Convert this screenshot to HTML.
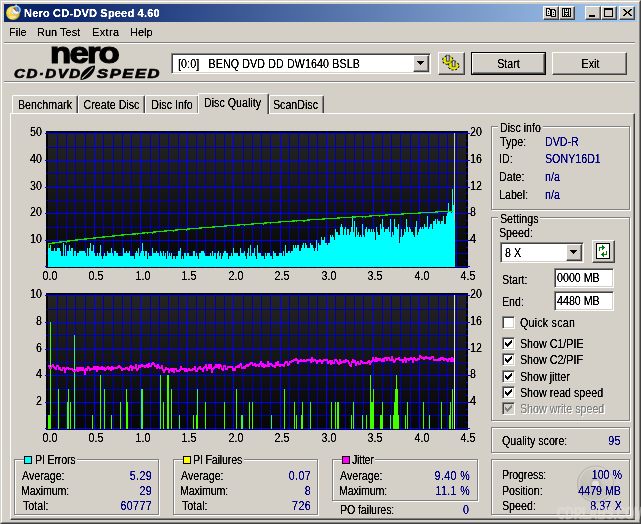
<!DOCTYPE html>
<html><head><meta charset="utf-8"><title>Nero CD-DVD Speed 4.60</title>
<style>
*{box-sizing:border-box;margin:0;padding:0}
html,body{width:641px;height:524px;overflow:hidden;background:#d4d0c8}
body{position:relative;font-family:"Liberation Sans",sans-serif;font-size:12px;color:#000;line-height:13px}
.a{position:absolute}
.t{position:absolute;white-space:nowrap;line-height:13px;height:13px;margin-top:1px;transform:scaleX(.89);transform-origin:0 0}
.c{text-align:center;transform-origin:50% 0}
.t,.m,.lg span{filter:url(#tx)}
.m{position:absolute;white-space:nowrap;line-height:13px;height:13px;font-size:11px}
.b{color:#000080}
.r{text-align:right;transform-origin:100% 0}
.hl{position:absolute;height:1px}
.vl{position:absolute;width:1px}
.grp{position:absolute;border:1px solid #808080;box-shadow:inset 1px 1px 0 #fff, 1px 1px 0 #fff}
.lg{position:absolute;background:#d4d0c8;white-space:nowrap;line-height:13px;height:14px;padding:1px 2px 0}
.lg span{display:inline-block;transform:scaleX(.89);transform-origin:0 0}
.btn{position:absolute;background:#d4d0c8;border:1px solid;border-color:#fff #404040 #404040 #fff;box-shadow:inset -1px -1px 0 #808080, inset 1px 1px 0 #d4d0c8}
.cap{position:absolute;background:#d4d0c8;border:1px solid;border-color:#fff #404040 #404040 #fff;box-shadow:inset -1px -1px 0 #808080;width:16px;height:14px;top:6px}
.sunk{position:absolute;background:#fff;border:1px solid;border-color:#808080 #fff #fff #808080;box-shadow:inset 1px 1px 0 #404040, inset -1px -1px 0 #d4d0c8}
.tab{position:absolute;background:#d4d0c8;border-top:1px solid #fff;border-left:1px solid #fff;border-right:1px solid #404040;box-shadow:inset -1px 0 0 #808080;border-radius:2px 2px 0 0;text-align:center;white-space:nowrap}
.cb{position:absolute;width:13px;height:13px;background:#fff;border:1px solid;border-color:#808080 #fff #fff #808080;box-shadow:inset 1px 1px 0 #404040, inset -1px -1px 0 #d4d0c8}
svg{position:absolute;left:0;top:0}
</style></head>
<body>
<svg width="0" height="0" style="position:absolute"><defs><filter id="tx" x="-5%" y="-25%" width="110%" height="150%" color-interpolation-filters="sRGB"><feComponentTransfer><feFuncA type="linear" slope="2.6" intercept="-0.45"/></feComponentTransfer></filter></defs></svg>
<div class="a" style="left:0;top:0;width:641px;height:524px;border:1px solid;border-color:#d4d0c8 #404040 #404040 #d4d0c8"></div>
<div class="a" style="left:1px;top:1px;width:639px;height:522px;border:1px solid;border-color:#ffffff #808080 #808080 #ffffff"></div>
<div class="a" style="left:4px;top:4px;width:633px;height:18px;background:linear-gradient(to right,#0a246a 0%,#0a246a 8%,#a6caf0 100%)"></div>
<svg width="30" height="24" viewBox="0 0 30 24">
<defs><radialGradient id="dg" cx="0.4" cy="0.35" r="0.75"><stop offset="0" stop-color="#fff6b0"/><stop offset="0.45" stop-color="#f2d838"/><stop offset="1" stop-color="#c8a010"/></radialGradient></defs>
<circle cx="13" cy="13" r="6.900" fill="url(#dg)"/>
<path d="M8 17.500 C10 15.500 13 15 17 16.500 C15.500 19 11 20 8 17.500z" fill="#f4e8b0" opacity="0.8"/>
<circle cx="12.600" cy="12.800" r="1.700" fill="#fffbe0" stroke="#b89820" stroke-width="0.5"/>
<circle cx="16.200" cy="10" r="4.300" fill="#f4f4f8" stroke="#a8b0c0" stroke-width="0.800"/>
<path d="M16.200 6.500 A3.500 3.500 0 0 1 18.500 12.600 L16.200 10z" fill="#2a8ae0"/>
<path d="M13 8.500 A3.500 3.500 0 0 1 16.200 6.500 L16.200 10z" fill="#60b850"/>
<path d="M13.800 7.800 L16.800 11.400" stroke="#d02818" stroke-width="1.200"/>
<rect x="15.400" y="4.600" width="1.600" height="1.300" fill="#d8dce8"/>
</svg>
<div class="m" style="left:24px;top:7px;color:#fff;font-weight:bold;letter-spacing:0.2px">Nero CD-DVD Speed 4.60</div>
<div class="cap" style="left:543px"></div>
<div class="cap" style="left:559px"></div>
<div class="cap" style="left:585px"></div>
<div class="cap" style="left:601px"></div>
<div class="cap" style="left:619px"></div>
<svg width="641" height="24" viewBox="0 0 641 24" shape-rendering="crispEdges">
<!-- copy icon -->
<path d="M546 8h4v1h1v7h-5z M551 9h4v1h1v7h-5z" fill="#000"/>
<path d="M547 9h2v1h1v5h-3z M552 10h2v1h1v5h-3z" fill="#eceae4"/>
<path d="M548 11h1v1h-1z M548 13h1v1h-1z M553 12h1v1h-1z M553 14h1v1h-1z" fill="#000"/>
<!-- save icon -->
<rect x="562" y="8" width="9" height="9" fill="#000"/>
<path d="M563 9h1v7h-1z M569 9h1v7h-1z M565 9h3v3h-3z M565 13h3v3h-3z" fill="#e4e2dc"/>
<path d="M566 9h1v2h-1z M565 14h1v1h-1z M566 15h1v1h-1z M567 14h1v1h-1z" fill="#000"/>
<!-- minimize -->
<rect x="589" y="15" width="6" height="2" fill="#000"/>
<!-- maximize -->
<path d="M604 8h9v9h-9z M605 10h7v6h-7z" fill="#000" fill-rule="evenodd"/>
<!-- close -->
<path d="M623 9h2v1h1v1h1v1h1v-1h1v-1h1v-1h2v1h-1v1h-1v1h-1v1h1v1h1v1h1v1h-2v-1h-1v-1h-1v-1h-1v1h-1v1h-1v1h-2v-1h1v-1h1v-1h1v-1h-1v-1h-1v-1h-1z" fill="#000"/>
</svg>
<div class="m" style="left:9px;top:26px;letter-spacing:0px">File</div>
<div class="m" style="left:37px;top:26px;letter-spacing:0px">Run Test</div>
<div class="m" style="left:92px;top:26px;letter-spacing:0.35px">Extra</div>
<div class="m" style="left:130px;top:26px;letter-spacing:0px">Help</div>
<div class="hl" style="left:4px;top:42px;width:631px;background:#808080"></div>
<div class="hl" style="left:4px;top:43px;width:631px;background:#ffffff"></div>
<div id="nero" class="a" style="left:44px;top:37px;width:80px;height:32px;font-weight:bold;font-size:30px;line-height:32px;letter-spacing:-1.6px;text-align:center;-webkit-text-stroke:1.2px #000;transform:scaleX(1.16);transform-origin:50% 0">nero</div>
<div id="cd" class="a" style="left:14px;top:67px;height:14px;font-weight:bold;font-style:italic;font-size:12px;line-height:14px;white-space:nowrap;letter-spacing:1.2px;-webkit-text-stroke:0.65px #000;transform-origin:0 0;transform:scaleX(1.255)">CD·DVD</div>
<div id="sp" class="a" style="left:96.5px;top:67px;height:14px;font-weight:bold;font-style:italic;font-size:12px;line-height:14px;white-space:nowrap;letter-spacing:1.2px;-webkit-text-stroke:0.65px #000;transform-origin:0 0;transform:scaleX(1.375)">SPEED</div>
<svg width="641" height="100" viewBox="0 0 641 100"><path d="M80.500 80 C80 72 86.500 66.500 95 65.500 C95.500 72 89.500 79.500 80.500 80z" fill="#000"/><path d="M82 78.500 C85.500 75.500 89.500 71.500 93 67.500" stroke="#d4d0c8" stroke-width="1.1" fill="none"/></svg>
<div class="sunk" style="left:171px;top:53px;width:260px;height:21px"></div>
<div class="t" style="left:178px;top:57px;letter-spacing:0.12px">[0:0]&nbsp;&nbsp; BENQ DVD DD DW1640 BSLB</div>
<div class="btn" style="left:413px;top:55px;width:16px;height:17px"></div>
<svg width="641" height="100" viewBox="0 0 641 100" shape-rendering="crispEdges"><path d="M417 61h7v1h-1v1h-1v1h-1v1h-1v-1h-1v-1h-1v-1h-1z" fill="#000"/></svg>
<div class="btn" style="left:438px;top:52px;width:27px;height:23px"></div>
<svg width="641" height="100" viewBox="0 0 641 100"><ellipse cx="447.8" cy="60.2" rx="4.600" ry="3.500" fill="#000" stroke="#000" stroke-width="2.400" stroke-dasharray="1.700 1.500"/>
<ellipse cx="447.8" cy="60.2" rx="4.500" ry="3.400" fill="#f0f000" stroke="#f0f000" stroke-width="1" stroke-dasharray="1.500 1.700" stroke-dashoffset="-0.100"/>
<ellipse cx="447.8" cy="60.2" rx="3.600" ry="2.600" fill="#e4e400"/>
<rect x="446.3" y="55.2" width="3" height="6" fill="#9098a8" stroke="#303030" stroke-width="0.700"/>
<rect x="447.2" y="55.6" width="1" height="5" fill="#d0d4dc"/><ellipse cx="453.6" cy="65.8" rx="4.600" ry="3.500" fill="#000" stroke="#000" stroke-width="2.400" stroke-dasharray="1.700 1.500"/>
<ellipse cx="453.6" cy="65.8" rx="4.500" ry="3.400" fill="#f0f000" stroke="#f0f000" stroke-width="1" stroke-dasharray="1.500 1.700" stroke-dashoffset="-0.100"/>
<ellipse cx="453.6" cy="65.8" rx="3.600" ry="2.600" fill="#e4e400"/>
<rect x="452.1" y="60.8" width="3" height="6" fill="#9098a8" stroke="#303030" stroke-width="0.700"/>
<rect x="453.0" y="61.199999999999996" width="1" height="5" fill="#d0d4dc"/></svg>
<div class="a" style="left:471px;top:52px;width:75px;height:23px;border:1px solid #000"></div>
<div class="btn" style="left:472px;top:53px;width:73px;height:21px"></div>
<div class="t c" style="left:472px;top:57px;width:73px">Start</div>
<div class="btn" style="left:552px;top:52px;width:75px;height:23px"></div>
<div class="t c" style="left:553px;top:57px;width:75px">Exit</div>
<div class="hl" style="left:4px;top:81px;width:631px;background:#808080"></div>
<div class="hl" style="left:4px;top:82px;width:631px;background:#ffffff"></div>
<div class="a" style="left:10px;top:113px;width:625px;height:407px;border:1px solid;border-color:#ffffff #404040 #404040 #ffffff;box-shadow:inset -1px -1px 0 #808080"></div>
<div class="tab" style="left:12px;top:95px;width:66px;height:18px"></div><div class="t c" style="left:12px;top:98px;width:66px">Benchmark</div>
<div class="tab" style="left:78px;top:95px;width:67px;height:18px"></div><div class="t c" style="left:78px;top:98px;width:67px">Create Disc</div>
<div class="tab" style="left:145px;top:95px;width:54px;height:18px"></div><div class="t c" style="left:145px;top:98px;width:54px">Disc Info</div>
<div class="tab" style="left:269px;top:95px;width:55px;height:18px"></div><div class="t c" style="left:268px;top:98px;width:55px">ScanDisc</div>
<div class="tab" style="left:198px;top:93px;width:71px;height:21px"></div><div class="t c" style="left:197px;top:96px;width:71px">Disc Quality</div>
<svg width="641" height="524" viewBox="0 0 641 524" shape-rendering="crispEdges">
<defs><linearGradient id="bg" x1="0" y1="0" x2="0" y2="1"><stop offset="0" stop-color="#242424"/><stop offset="1" stop-color="#060606"/></linearGradient></defs>
<rect x="46" y="131" width="422" height="137" fill="#000"/>
<rect x="48" y="133" width="418" height="134" fill="url(#bg)"/>
<rect x="57" y="133" width="1" height="135" fill="#0000b4"/>
<rect x="66" y="133" width="1" height="135" fill="#0000b4"/>
<rect x="75" y="133" width="1" height="135" fill="#0000b4"/>
<rect x="85" y="133" width="1" height="135" fill="#0000b4"/>
<rect x="94" y="133" width="1" height="135" fill="#0000ff"/>
<rect x="103" y="133" width="1" height="135" fill="#0000b4"/>
<rect x="113" y="133" width="1" height="135" fill="#0000b4"/>
<rect x="122" y="133" width="1" height="135" fill="#0000b4"/>
<rect x="131" y="133" width="1" height="135" fill="#0000b4"/>
<rect x="140" y="133" width="1" height="135" fill="#0000ff"/>
<rect x="150" y="133" width="1" height="135" fill="#0000b4"/>
<rect x="159" y="133" width="1" height="135" fill="#0000b4"/>
<rect x="168" y="133" width="1" height="135" fill="#0000b4"/>
<rect x="178" y="133" width="1" height="135" fill="#0000b4"/>
<rect x="187" y="133" width="1" height="135" fill="#0000ff"/>
<rect x="196" y="133" width="1" height="135" fill="#0000b4"/>
<rect x="205" y="133" width="1" height="135" fill="#0000b4"/>
<rect x="215" y="133" width="1" height="135" fill="#0000b4"/>
<rect x="224" y="133" width="1" height="135" fill="#0000b4"/>
<rect x="233" y="133" width="1" height="135" fill="#0000ff"/>
<rect x="243" y="133" width="1" height="135" fill="#0000b4"/>
<rect x="252" y="133" width="1" height="135" fill="#0000b4"/>
<rect x="261" y="133" width="1" height="135" fill="#0000b4"/>
<rect x="270" y="133" width="1" height="135" fill="#0000b4"/>
<rect x="280" y="133" width="1" height="135" fill="#0000ff"/>
<rect x="289" y="133" width="1" height="135" fill="#0000b4"/>
<rect x="298" y="133" width="1" height="135" fill="#0000b4"/>
<rect x="308" y="133" width="1" height="135" fill="#0000b4"/>
<rect x="317" y="133" width="1" height="135" fill="#0000b4"/>
<rect x="326" y="133" width="1" height="135" fill="#0000ff"/>
<rect x="335" y="133" width="1" height="135" fill="#0000b4"/>
<rect x="345" y="133" width="1" height="135" fill="#0000b4"/>
<rect x="354" y="133" width="1" height="135" fill="#0000b4"/>
<rect x="363" y="133" width="1" height="135" fill="#0000b4"/>
<rect x="373" y="133" width="1" height="135" fill="#0000ff"/>
<rect x="382" y="133" width="1" height="135" fill="#0000b4"/>
<rect x="391" y="133" width="1" height="135" fill="#0000b4"/>
<rect x="400" y="133" width="1" height="135" fill="#0000b4"/>
<rect x="410" y="133" width="1" height="135" fill="#0000b4"/>
<rect x="419" y="133" width="1" height="135" fill="#0000ff"/>
<rect x="428" y="133" width="1" height="135" fill="#0000b4"/>
<rect x="438" y="133" width="1" height="135" fill="#0000b4"/>
<rect x="447" y="133" width="1" height="135" fill="#0000b4"/>
<rect x="456" y="133" width="1" height="135" fill="#0000b4"/>
<rect x="45" y="133" width="425" height="1" fill="#0000ff"/>
<rect x="46" y="147" width="422" height="1" fill="#0000b4"/>
<rect x="45" y="160" width="425" height="1" fill="#0000ff"/>
<rect x="46" y="173" width="422" height="1" fill="#0000b4"/>
<rect x="45" y="187" width="425" height="1" fill="#0000ff"/>
<rect x="46" y="200" width="422" height="1" fill="#0000b4"/>
<rect x="45" y="213" width="425" height="1" fill="#0000ff"/>
<rect x="46" y="227" width="422" height="1" fill="#0000b4"/>
<rect x="45" y="240" width="425" height="1" fill="#0000ff"/>
<rect x="46" y="253" width="422" height="1" fill="#0000b4"/>
<rect x="45" y="266" width="425" height="1" fill="#0000ff"/>
<rect x="466" y="140" width="2" height="1" fill="#0000ff"/>
<rect x="466" y="147" width="2" height="1" fill="#0000ff"/>
<rect x="466" y="153" width="2" height="1" fill="#0000ff"/>
<rect x="466" y="160" width="2" height="1" fill="#0000ff"/>
<rect x="466" y="167" width="2" height="1" fill="#0000ff"/>
<rect x="466" y="173" width="2" height="1" fill="#0000ff"/>
<rect x="466" y="180" width="2" height="1" fill="#0000ff"/>
<rect x="466" y="187" width="2" height="1" fill="#0000ff"/>
<rect x="466" y="193" width="2" height="1" fill="#0000ff"/>
<rect x="466" y="200" width="2" height="1" fill="#0000ff"/>
<rect x="466" y="207" width="2" height="1" fill="#0000ff"/>
<rect x="466" y="213" width="2" height="1" fill="#0000ff"/>
<rect x="466" y="220" width="2" height="1" fill="#0000ff"/>
<rect x="466" y="227" width="2" height="1" fill="#0000ff"/>
<rect x="466" y="233" width="2" height="1" fill="#0000ff"/>
<rect x="466" y="240" width="2" height="1" fill="#0000ff"/>
<rect x="466" y="247" width="2" height="1" fill="#0000ff"/>
<rect x="466" y="253" width="2" height="1" fill="#0000ff"/>
<rect x="466" y="260" width="2" height="1" fill="#0000ff"/>
<rect x="46" y="293" width="422" height="137" fill="#000"/>
<rect x="48" y="295" width="418" height="134" fill="url(#bg)"/>
<rect x="57" y="295" width="1" height="135" fill="#0000b4"/>
<rect x="66" y="295" width="1" height="135" fill="#0000b4"/>
<rect x="75" y="295" width="1" height="135" fill="#0000b4"/>
<rect x="85" y="295" width="1" height="135" fill="#0000b4"/>
<rect x="94" y="295" width="1" height="135" fill="#0000ff"/>
<rect x="103" y="295" width="1" height="135" fill="#0000b4"/>
<rect x="113" y="295" width="1" height="135" fill="#0000b4"/>
<rect x="122" y="295" width="1" height="135" fill="#0000b4"/>
<rect x="131" y="295" width="1" height="135" fill="#0000b4"/>
<rect x="140" y="295" width="1" height="135" fill="#0000ff"/>
<rect x="150" y="295" width="1" height="135" fill="#0000b4"/>
<rect x="159" y="295" width="1" height="135" fill="#0000b4"/>
<rect x="168" y="295" width="1" height="135" fill="#0000b4"/>
<rect x="178" y="295" width="1" height="135" fill="#0000b4"/>
<rect x="187" y="295" width="1" height="135" fill="#0000ff"/>
<rect x="196" y="295" width="1" height="135" fill="#0000b4"/>
<rect x="205" y="295" width="1" height="135" fill="#0000b4"/>
<rect x="215" y="295" width="1" height="135" fill="#0000b4"/>
<rect x="224" y="295" width="1" height="135" fill="#0000b4"/>
<rect x="233" y="295" width="1" height="135" fill="#0000ff"/>
<rect x="243" y="295" width="1" height="135" fill="#0000b4"/>
<rect x="252" y="295" width="1" height="135" fill="#0000b4"/>
<rect x="261" y="295" width="1" height="135" fill="#0000b4"/>
<rect x="270" y="295" width="1" height="135" fill="#0000b4"/>
<rect x="280" y="295" width="1" height="135" fill="#0000ff"/>
<rect x="289" y="295" width="1" height="135" fill="#0000b4"/>
<rect x="298" y="295" width="1" height="135" fill="#0000b4"/>
<rect x="308" y="295" width="1" height="135" fill="#0000b4"/>
<rect x="317" y="295" width="1" height="135" fill="#0000b4"/>
<rect x="326" y="295" width="1" height="135" fill="#0000ff"/>
<rect x="335" y="295" width="1" height="135" fill="#0000b4"/>
<rect x="345" y="295" width="1" height="135" fill="#0000b4"/>
<rect x="354" y="295" width="1" height="135" fill="#0000b4"/>
<rect x="363" y="295" width="1" height="135" fill="#0000b4"/>
<rect x="373" y="295" width="1" height="135" fill="#0000ff"/>
<rect x="382" y="295" width="1" height="135" fill="#0000b4"/>
<rect x="391" y="295" width="1" height="135" fill="#0000b4"/>
<rect x="400" y="295" width="1" height="135" fill="#0000b4"/>
<rect x="410" y="295" width="1" height="135" fill="#0000b4"/>
<rect x="419" y="295" width="1" height="135" fill="#0000ff"/>
<rect x="428" y="295" width="1" height="135" fill="#0000b4"/>
<rect x="438" y="295" width="1" height="135" fill="#0000b4"/>
<rect x="447" y="295" width="1" height="135" fill="#0000b4"/>
<rect x="456" y="295" width="1" height="135" fill="#0000b4"/>
<rect x="45" y="295" width="425" height="1" fill="#0000ff"/>
<rect x="46" y="309" width="422" height="1" fill="#0000b4"/>
<rect x="45" y="322" width="425" height="1" fill="#0000ff"/>
<rect x="46" y="335" width="422" height="1" fill="#0000b4"/>
<rect x="45" y="349" width="425" height="1" fill="#0000ff"/>
<rect x="46" y="362" width="422" height="1" fill="#0000b4"/>
<rect x="45" y="375" width="425" height="1" fill="#0000ff"/>
<rect x="46" y="389" width="422" height="1" fill="#0000b4"/>
<rect x="45" y="402" width="425" height="1" fill="#0000ff"/>
<rect x="46" y="415" width="422" height="1" fill="#0000b4"/>
<rect x="45" y="428" width="425" height="1" fill="#0000ff"/>
<rect x="466" y="302" width="2" height="1" fill="#0000ff"/>
<rect x="466" y="309" width="2" height="1" fill="#0000ff"/>
<rect x="466" y="315" width="2" height="1" fill="#0000ff"/>
<rect x="466" y="322" width="2" height="1" fill="#0000ff"/>
<rect x="466" y="329" width="2" height="1" fill="#0000ff"/>
<rect x="466" y="335" width="2" height="1" fill="#0000ff"/>
<rect x="466" y="342" width="2" height="1" fill="#0000ff"/>
<rect x="466" y="349" width="2" height="1" fill="#0000ff"/>
<rect x="466" y="355" width="2" height="1" fill="#0000ff"/>
<rect x="466" y="362" width="2" height="1" fill="#0000ff"/>
<rect x="466" y="369" width="2" height="1" fill="#0000ff"/>
<rect x="466" y="375" width="2" height="1" fill="#0000ff"/>
<rect x="466" y="382" width="2" height="1" fill="#0000ff"/>
<rect x="466" y="389" width="2" height="1" fill="#0000ff"/>
<rect x="466" y="395" width="2" height="1" fill="#0000ff"/>
<rect x="466" y="402" width="2" height="1" fill="#0000ff"/>
<rect x="466" y="409" width="2" height="1" fill="#0000ff"/>
<rect x="466" y="415" width="2" height="1" fill="#0000ff"/>
<rect x="466" y="422" width="2" height="1" fill="#0000ff"/>
<path d="M48 267V248H49V248H50V245H51V251H52V251H53V251H54V248H55V251H56V251H57V248H58V248H59V248H60V251H61V256H62V256H63V243H64V256H65V245H66V256H67V251H68V251H69V245H70V251H71V248H72V248H73V256H74V251H75V251H76V256H77V253H78V253H79V251H80V251H81V251H82V251H83V251H84V251H85V253H86V256H87V248H88V256H89V248H90V243H91V251H92V251H93V245H94V253H95V256H96V256H97V253H98V256H99V253H100V245H101V256H102V259H103V256H104V253H105V256H106V256H107V251H108V253H109V253H110V253H111V248H112V253H113V256H114V251H115V251H116V253H117V253H118V256H119V256H120V256H121V256H122V256H123V248H124V253H125V253H126V251H127V253H128V253H129V251H130V256H131V256H132V256H133V256H134V259H135V253H136V251H137V253H138V248H139V256H140V253H141V251H142V243H143V251H144V256H145V251H146V251H147V259H148V253H149V256H150V256H151V256H152V248H153V253H154V253H155V253H156V251H157V253H158V253H159V256H160V251H161V253H162V256H163V251H164V256H165V253H166V259H167V251H168V256H169V253H170V256H171V253H172V259H173V256H174V256H175V259H176V256H177V256H178V251H179V251H180V248H181V259H182V256H183V259H184V253H185V253H186V256H187V253H188V253H189V256H190V256H191V256H192V256H193V251H194V251H195V256H196V253H197V256H198V259H199V253H200V253H201V251H202V251H203V251H204V253H205V256H206V256H207V256H208V256H209V256H210V253H211V256H212V251H213V256H214V253H215V253H216V259H217V253H218V251H219V256H220V253H221V259H222V256H223V253H224V251H225V251H226V253H227V253H228V259H229V256H230V256H231V253H232V256H233V248H234V253H235V253H236V253H237V253H238V256H239V256H240V248H241V253H242V253H243V253H244V251H245V256H246V259H247V253H248V248H249V256H250V245H251V256H252V253H253V253H254V248H255V256H256V259H257V245H258V253H259V253H260V253H261V256H262V256H263V256H264V259H265V253H266V256H267V253H268V253H269V253H270V256H271V256H272V259H273V251H274V253H275V253H276V256H277V256H278V256H279V253H280V253H281V253H282V256H283V251H284V256H285V245H286V253H287V253H288V251H289V251H290V253H291V251H292V251H293V245H294V248H295V245H296V248H297V245H298V245H299V251H300V251H301V248H302V245H303V243H304V248H305V243H306V245H307V248H308V248H309V248H310V243H311V245H312V245H313V248H314V251H315V248H316V240H317V251H318V243H319V245H320V245H321V237H322V240H323V240H324V237H325V243H326V243H327V245H328V243H329V243H330V235H331V237H332V235H333V237H334V240H335V229H336V232H337V232H338V235H339V235H340V227H341V224H342V227H343V235H344V229H345V227H346V235H347V229H348V229H349V235H350V232H351V227H352V216H353V232H354V221H355V237H356V227H357V235H358V232H359V237H360V235H361V237H362V224H363V235H364V237H365V229H366V227H367V232H368V229H369V229H370V232H371V229H372V232H373V229H374V232H375V240H376V227H377V232H378V235H379V235H380V224H381V229H382V219H383V227H384V232H385V229H386V229H387V229H388V227H389V232H390V219H391V237H392V232H393V235H394V219H395V227H396V227H397V229H398V224H399V243H400V237H401V229H402V237H403V235H404V229H405V232H406V219H407V227H408V232H409V227H410V229H411V232H412V232H413V235H414V237H415V227H416V221H417V235H418V232H419V229H420V227H421V229H422V227H423V229H424V224H425V227H426V227H427V216H428V229H429V227H430V224H431V224H432V229H433V221H434V221H435V219H436V224H437V219H438V221H439V221H440V224H441V221H442V221H443V216H444V224H445V224H446V216H447V213H448V203H449V211H450V211H451V213H452V189H453V205H454V219H455V267Z" fill="#00ffff"/>
<rect x="454" y="133" width="1" height="87" fill="#c8c8c8"/>
<rect x="454" y="295" width="1" height="134" fill="#e0e0e0"/>
<rect x="48" y="243" width="1" height="5" fill="#14e000"/>
<path d="M48 243h1v1h-1zM49 243h1v1h-1zM50 243h1v1h-1zM51 243h1v1h-1zM52 242h1v2h-1zM53 242h1v2h-1zM54 242h1v2h-1zM55 242h1v1h-1zM56 242h1v1h-1zM57 242h1v1h-1zM58 242h1v1h-1zM59 241h1v2h-1zM60 241h1v2h-1zM61 241h1v2h-1zM62 241h1v1h-1zM63 241h1v1h-1zM64 241h1v1h-1zM65 241h1v1h-1zM66 241h1v1h-1zM67 240h1v2h-1zM68 240h1v2h-1zM69 240h1v2h-1zM70 240h1v1h-1zM71 240h1v1h-1zM72 240h1v1h-1zM73 240h1v1h-1zM74 240h1v1h-1zM75 239h1v2h-1zM76 239h1v2h-1zM77 239h1v2h-1zM78 239h1v1h-1zM79 239h1v1h-1zM80 239h1v1h-1zM81 239h1v1h-1zM82 239h1v1h-1zM83 239h1v1h-1zM84 238h1v2h-1zM85 238h1v2h-1zM86 238h1v2h-1zM87 238h1v1h-1zM88 238h1v1h-1zM89 238h1v1h-1zM90 238h1v1h-1zM91 238h1v1h-1zM92 238h1v1h-1zM93 237h1v2h-1zM94 237h1v2h-1zM95 237h1v2h-1zM96 237h1v1h-1zM97 237h1v1h-1zM98 237h1v1h-1zM99 237h1v1h-1zM100 237h1v1h-1zM101 237h1v1h-1zM102 236h1v2h-1zM103 236h1v2h-1zM104 236h1v2h-1zM105 236h1v1h-1zM106 236h1v1h-1zM107 236h1v1h-1zM108 236h1v1h-1zM109 236h1v1h-1zM110 236h1v1h-1zM111 236h1v1h-1zM112 235h1v2h-1zM113 235h1v2h-1zM114 235h1v2h-1zM115 235h1v1h-1zM116 235h1v1h-1zM117 235h1v1h-1zM118 235h1v1h-1zM119 235h1v1h-1zM120 235h1v1h-1zM121 234h1v2h-1zM122 234h1v2h-1zM123 234h1v2h-1zM124 234h1v1h-1zM125 234h1v1h-1zM126 234h1v1h-1zM127 234h1v1h-1zM128 234h1v1h-1zM129 234h1v1h-1zM130 234h1v1h-1zM131 234h1v1h-1zM132 233h1v2h-1zM133 233h1v2h-1zM134 233h1v2h-1zM135 233h1v1h-1zM136 233h1v1h-1zM137 233h1v1h-1zM138 233h1v1h-1zM139 233h1v1h-1zM140 233h1v1h-1zM141 233h1v1h-1zM142 232h1v2h-1zM143 232h1v2h-1zM144 232h1v2h-1zM145 232h1v1h-1zM146 232h1v1h-1zM147 232h1v1h-1zM148 232h1v1h-1zM149 232h1v1h-1zM150 232h1v1h-1zM151 232h1v1h-1zM152 232h1v1h-1zM153 231h1v2h-1zM154 231h1v2h-1zM155 231h1v2h-1zM156 231h1v1h-1zM157 231h1v1h-1zM158 231h1v1h-1zM159 231h1v1h-1zM160 231h1v1h-1zM161 231h1v1h-1zM162 231h1v1h-1zM163 231h1v1h-1zM164 230h1v2h-1zM165 230h1v2h-1zM166 230h1v2h-1zM167 230h1v1h-1zM168 230h1v1h-1zM169 230h1v1h-1zM170 230h1v1h-1zM171 230h1v1h-1zM172 230h1v1h-1zM173 230h1v1h-1zM174 230h1v1h-1zM175 229h1v2h-1zM176 229h1v2h-1zM177 229h1v2h-1zM178 229h1v1h-1zM179 229h1v1h-1zM180 229h1v1h-1zM181 229h1v1h-1zM182 229h1v1h-1zM183 229h1v1h-1zM184 229h1v1h-1zM185 229h1v1h-1zM186 229h1v1h-1zM187 228h1v2h-1zM188 228h1v2h-1zM189 228h1v2h-1zM190 228h1v1h-1zM191 228h1v1h-1zM192 228h1v1h-1zM193 228h1v1h-1zM194 228h1v1h-1zM195 228h1v1h-1zM196 228h1v1h-1zM197 228h1v1h-1zM198 228h1v1h-1zM199 227h1v2h-1zM200 227h1v2h-1zM201 227h1v2h-1zM202 227h1v1h-1zM203 227h1v1h-1zM204 227h1v1h-1zM205 227h1v1h-1zM206 227h1v1h-1zM207 227h1v1h-1zM208 227h1v1h-1zM209 227h1v1h-1zM210 227h1v1h-1zM211 227h1v1h-1zM212 226h1v2h-1zM213 226h1v2h-1zM214 226h1v2h-1zM215 226h1v1h-1zM216 226h1v1h-1zM217 226h1v1h-1zM218 226h1v1h-1zM219 226h1v1h-1zM220 226h1v1h-1zM221 226h1v1h-1zM222 226h1v1h-1zM223 226h1v1h-1zM224 225h1v2h-1zM225 225h1v2h-1zM226 225h1v2h-1zM227 225h1v1h-1zM228 225h1v1h-1zM229 225h1v1h-1zM230 225h1v1h-1zM231 225h1v1h-1zM232 225h1v1h-1zM233 225h1v1h-1zM234 225h1v1h-1zM235 225h1v1h-1zM236 225h1v1h-1zM237 224h1v2h-1zM238 224h1v2h-1zM239 224h1v2h-1zM240 224h1v1h-1zM241 224h1v1h-1zM242 224h1v1h-1zM243 224h1v1h-1zM244 224h1v1h-1zM245 224h1v1h-1zM246 224h1v1h-1zM247 224h1v1h-1zM248 224h1v1h-1zM249 224h1v1h-1zM250 224h1v1h-1zM251 223h1v2h-1zM252 223h1v2h-1zM253 223h1v2h-1zM254 223h1v1h-1zM255 223h1v1h-1zM256 223h1v1h-1zM257 223h1v1h-1zM258 223h1v1h-1zM259 223h1v1h-1zM260 223h1v1h-1zM261 223h1v1h-1zM262 223h1v1h-1zM263 223h1v1h-1zM264 222h1v2h-1zM265 222h1v2h-1zM266 222h1v2h-1zM267 222h1v1h-1zM268 222h1v1h-1zM269 222h1v1h-1zM270 222h1v1h-1zM271 222h1v1h-1zM272 222h1v1h-1zM273 222h1v1h-1zM274 222h1v1h-1zM275 222h1v1h-1zM276 222h1v1h-1zM277 222h1v1h-1zM278 221h1v2h-1zM279 221h1v2h-1zM280 221h1v2h-1zM281 221h1v1h-1zM282 221h1v1h-1zM283 221h1v1h-1zM284 221h1v1h-1zM285 221h1v1h-1zM286 221h1v1h-1zM287 221h1v1h-1zM288 221h1v1h-1zM289 221h1v1h-1zM290 221h1v1h-1zM291 221h1v1h-1zM292 220h1v2h-1zM293 220h1v2h-1zM294 220h1v2h-1zM295 220h1v1h-1zM296 220h1v1h-1zM297 220h1v1h-1zM298 220h1v1h-1zM299 220h1v1h-1zM300 220h1v1h-1zM301 220h1v1h-1zM302 220h1v1h-1zM303 220h1v1h-1zM304 220h1v1h-1zM305 220h1v1h-1zM306 220h1v1h-1zM307 219h1v2h-1zM308 219h1v2h-1zM309 219h1v2h-1zM310 219h1v1h-1zM311 219h1v1h-1zM312 219h1v1h-1zM313 219h1v1h-1zM314 219h1v1h-1zM315 219h1v1h-1zM316 219h1v1h-1zM317 219h1v1h-1zM318 219h1v1h-1zM319 219h1v1h-1zM320 219h1v1h-1zM321 219h1v1h-1zM322 218h1v2h-1zM323 218h1v2h-1zM324 218h1v2h-1zM325 218h1v1h-1zM326 218h1v1h-1zM327 218h1v1h-1zM328 218h1v1h-1zM329 218h1v1h-1zM330 218h1v1h-1zM331 218h1v1h-1zM332 218h1v1h-1zM333 218h1v1h-1zM334 218h1v1h-1zM335 218h1v1h-1zM336 218h1v1h-1zM337 217h1v2h-1zM338 217h1v2h-1zM339 217h1v2h-1zM340 217h1v1h-1zM341 217h1v1h-1zM342 217h1v1h-1zM343 217h1v1h-1zM344 217h1v1h-1zM345 217h1v1h-1zM346 217h1v1h-1zM347 217h1v1h-1zM348 217h1v1h-1zM349 217h1v1h-1zM350 217h1v1h-1zM351 217h1v1h-1zM352 217h1v1h-1zM353 216h1v2h-1zM354 216h1v2h-1zM355 216h1v2h-1zM356 216h1v1h-1zM357 216h1v1h-1zM358 216h1v1h-1zM359 216h1v1h-1zM360 216h1v1h-1zM361 216h1v1h-1zM362 216h1v1h-1zM363 216h1v1h-1zM364 216h1v1h-1zM365 216h1v1h-1zM366 216h1v1h-1zM367 216h1v1h-1zM368 216h1v1h-1zM369 215h1v2h-1zM370 215h1v2h-1zM371 215h1v2h-1zM372 215h1v1h-1zM373 215h1v1h-1zM374 215h1v1h-1zM375 215h1v1h-1zM376 215h1v1h-1zM377 215h1v1h-1zM378 215h1v1h-1zM379 215h1v1h-1zM380 215h1v1h-1zM381 215h1v1h-1zM382 215h1v1h-1zM383 215h1v1h-1zM384 215h1v1h-1zM385 214h1v2h-1zM386 214h1v2h-1zM387 214h1v2h-1zM388 214h1v1h-1zM389 214h1v1h-1zM390 214h1v1h-1zM391 214h1v1h-1zM392 214h1v1h-1zM393 214h1v1h-1zM394 214h1v1h-1zM395 214h1v1h-1zM396 214h1v1h-1zM397 214h1v1h-1zM398 214h1v1h-1zM399 214h1v1h-1zM400 214h1v1h-1zM401 213h1v2h-1zM402 213h1v2h-1zM403 213h1v2h-1zM404 213h1v1h-1zM405 213h1v1h-1zM406 213h1v1h-1zM407 213h1v1h-1zM408 213h1v1h-1zM409 213h1v1h-1zM410 213h1v1h-1zM411 213h1v1h-1zM412 213h1v1h-1zM413 213h1v1h-1zM414 213h1v1h-1zM415 213h1v1h-1zM416 213h1v1h-1zM417 213h1v1h-1zM418 212h1v2h-1zM419 212h1v2h-1zM420 212h1v2h-1zM421 212h1v1h-1zM422 212h1v1h-1zM423 212h1v1h-1zM424 212h1v1h-1zM425 212h1v1h-1zM426 212h1v1h-1zM427 212h1v1h-1zM428 212h1v1h-1zM429 212h1v1h-1zM430 212h1v1h-1zM431 212h1v1h-1zM432 212h1v1h-1zM433 212h1v1h-1zM434 212h1v1h-1zM435 211h1v2h-1zM436 211h1v2h-1zM437 211h1v2h-1zM438 211h1v1h-1zM439 211h1v1h-1zM440 211h1v1h-1zM441 211h1v1h-1zM442 211h1v1h-1zM443 211h1v1h-1zM444 211h1v1h-1zM445 211h1v1h-1zM446 211h1v1h-1zM447 211h1v1h-1zM448 211h1v1h-1zM449 211h1v1h-1zM450 211h1v1h-1zM451 211h1v1h-1zM452 211h1v1h-1z" fill="#14e000"/>
<path d="M66 242h1v1h-1zM85 239h1v1h-1zM135 234h1v1h-1zM137 234h1v1h-1zM147 233h1v1h-1zM152 233h1v1h-1zM173 231h1v1h-1zM176 230h1v1h-1zM186 230h1v1h-1zM201 228h1v1h-1zM244 225h1v1h-1zM263 224h1v1h-1zM270 223h1v1h-1zM293 221h1v1h-1zM296 221h1v1h-1zM303 221h1v1h-1zM304 221h1v1h-1zM362 217h1v1h-1zM365 217h1v1h-1zM370 216h1v1h-1zM379 216h1v1h-1zM435 212h1v1h-1z" fill="#14e000"/>
<rect x="48" y="415" width="1" height="14" fill="#40ff00"/>
<rect x="49" y="415" width="1" height="14" fill="#40ff00"/>
<rect x="50" y="322" width="1" height="107" fill="#40ff00"/>
<rect x="58" y="389" width="1" height="40" fill="#40ff00"/>
<rect x="67" y="402" width="1" height="27" fill="#40ff00"/>
<rect x="68" y="389" width="1" height="40" fill="#40ff00"/>
<rect x="70" y="402" width="1" height="27" fill="#40ff00"/>
<rect x="74" y="335" width="1" height="94" fill="#40ff00"/>
<rect x="92" y="415" width="1" height="14" fill="#40ff00"/>
<rect x="100" y="375" width="1" height="54" fill="#40ff00"/>
<rect x="104" y="389" width="1" height="40" fill="#40ff00"/>
<rect x="111" y="415" width="1" height="14" fill="#40ff00"/>
<rect x="120" y="402" width="1" height="27" fill="#40ff00"/>
<rect x="126" y="389" width="1" height="40" fill="#40ff00"/>
<rect x="127" y="402" width="1" height="27" fill="#40ff00"/>
<rect x="141" y="389" width="1" height="40" fill="#40ff00"/>
<rect x="142" y="389" width="1" height="40" fill="#40ff00"/>
<rect x="160" y="375" width="1" height="54" fill="#40ff00"/>
<rect x="163" y="402" width="1" height="27" fill="#40ff00"/>
<rect x="167" y="375" width="1" height="54" fill="#40ff00"/>
<rect x="168" y="375" width="1" height="54" fill="#40ff00"/>
<rect x="171" y="389" width="1" height="40" fill="#40ff00"/>
<rect x="179" y="415" width="1" height="14" fill="#40ff00"/>
<rect x="193" y="415" width="1" height="14" fill="#40ff00"/>
<rect x="196" y="415" width="1" height="14" fill="#40ff00"/>
<rect x="197" y="389" width="1" height="40" fill="#40ff00"/>
<rect x="205" y="402" width="1" height="27" fill="#40ff00"/>
<rect x="224" y="402" width="1" height="27" fill="#40ff00"/>
<rect x="236" y="389" width="1" height="40" fill="#40ff00"/>
<rect x="241" y="415" width="1" height="14" fill="#40ff00"/>
<rect x="242" y="415" width="1" height="14" fill="#40ff00"/>
<rect x="249" y="402" width="1" height="27" fill="#40ff00"/>
<rect x="252" y="402" width="1" height="27" fill="#40ff00"/>
<rect x="271" y="415" width="1" height="14" fill="#40ff00"/>
<rect x="284" y="389" width="1" height="40" fill="#40ff00"/>
<rect x="294" y="402" width="1" height="27" fill="#40ff00"/>
<rect x="296" y="415" width="1" height="14" fill="#40ff00"/>
<rect x="301" y="415" width="1" height="14" fill="#40ff00"/>
<rect x="302" y="402" width="1" height="27" fill="#40ff00"/>
<rect x="310" y="402" width="1" height="27" fill="#40ff00"/>
<rect x="331" y="402" width="1" height="27" fill="#40ff00"/>
<rect x="335" y="402" width="1" height="27" fill="#40ff00"/>
<rect x="337" y="402" width="1" height="27" fill="#40ff00"/>
<rect x="338" y="402" width="1" height="27" fill="#40ff00"/>
<rect x="351" y="415" width="1" height="14" fill="#40ff00"/>
<rect x="353" y="402" width="1" height="27" fill="#40ff00"/>
<rect x="362" y="415" width="1" height="14" fill="#40ff00"/>
<rect x="366" y="415" width="1" height="14" fill="#40ff00"/>
<rect x="370" y="375" width="1" height="54" fill="#40ff00"/>
<rect x="371" y="402" width="1" height="27" fill="#40ff00"/>
<rect x="372" y="402" width="1" height="27" fill="#40ff00"/>
<rect x="373" y="389" width="1" height="40" fill="#40ff00"/>
<rect x="380" y="415" width="1" height="14" fill="#40ff00"/>
<rect x="381" y="415" width="1" height="14" fill="#40ff00"/>
<rect x="382" y="402" width="1" height="27" fill="#40ff00"/>
<rect x="390" y="415" width="1" height="14" fill="#40ff00"/>
<rect x="393" y="415" width="1" height="14" fill="#40ff00"/>
<rect x="394" y="402" width="1" height="27" fill="#40ff00"/>
<rect x="395" y="389" width="1" height="40" fill="#40ff00"/>
<rect x="396" y="375" width="1" height="54" fill="#40ff00"/>
<rect x="397" y="389" width="1" height="40" fill="#40ff00"/>
<rect x="398" y="415" width="1" height="14" fill="#40ff00"/>
<rect x="405" y="415" width="1" height="14" fill="#40ff00"/>
<rect x="407" y="402" width="1" height="27" fill="#40ff00"/>
<rect x="423" y="402" width="1" height="27" fill="#40ff00"/>
<rect x="429" y="415" width="1" height="14" fill="#40ff00"/>
<rect x="441" y="402" width="1" height="27" fill="#40ff00"/>
<rect x="449" y="415" width="1" height="14" fill="#40ff00"/>
<rect x="450" y="402" width="1" height="27" fill="#40ff00"/>
<rect x="452" y="389" width="1" height="40" fill="#40ff00"/>
<path d="M48 365h1v2h-1zM49 365h1v4h-1zM50 367h1v2h-1zM51 365h1v4h-1zM52 364h1v3h-1zM53 364h1v4h-1zM54 366h1v3h-1zM55 367h1v3h-1zM56 365h1v5h-1zM57 365h1v2h-1zM58 365h1v5h-1zM59 367h1v3h-1zM60 367h1v4h-1zM61 369h1v2h-1zM62 367h1v4h-1zM63 367h1v2h-1zM64 367h1v6h-1zM65 368h1v5h-1zM66 367h1v3h-1zM67 367h1v2h-1zM68 367h1v3h-1zM69 368h1v2h-1zM70 368h1v2h-1zM71 368h1v2h-1zM72 368h1v3h-1zM73 369h1v3h-1zM74 370h1v2h-1zM75 369h1v3h-1zM76 367h1v4h-1zM77 367h1v5h-1zM78 367h1v5h-1zM79 367h1v4h-1zM80 367h1v4h-1zM81 367h1v4h-1zM82 367h1v4h-1zM83 367h1v4h-1zM84 369h1v6h-1zM85 368h1v7h-1zM86 368h1v3h-1zM87 366h1v5h-1zM88 366h1v3h-1zM89 367h1v4h-1zM90 368h1v3h-1zM91 368h1v2h-1zM92 368h1v2h-1zM93 366h1v4h-1zM94 366h1v4h-1zM95 366h1v4h-1zM96 366h1v6h-1zM97 366h1v6h-1zM98 366h1v4h-1zM99 367h1v3h-1zM100 367h1v3h-1zM101 366h1v4h-1zM102 366h1v4h-1zM103 367h1v3h-1zM104 367h1v4h-1zM105 368h1v3h-1zM106 367h1v3h-1zM107 366h1v3h-1zM108 366h1v4h-1zM109 367h1v3h-1zM110 367h1v4h-1zM111 366h1v5h-1zM112 366h1v4h-1zM113 367h1v3h-1zM114 367h1v2h-1zM115 367h1v2h-1zM116 367h1v2h-1zM117 366h1v3h-1zM118 365h1v3h-1zM119 365h1v3h-1zM120 366h1v3h-1zM121 367h1v4h-1zM122 368h1v3h-1zM123 368h1v2h-1zM124 368h1v2h-1zM125 367h1v3h-1zM126 367h1v2h-1zM127 367h1v3h-1zM128 368h1v3h-1zM129 366h1v5h-1zM130 365h1v3h-1zM131 365h1v6h-1zM132 366h1v5h-1zM133 366h1v3h-1zM134 367h1v2h-1zM135 364h1v5h-1zM136 364h1v7h-1zM137 368h1v3h-1zM138 365h1v5h-1zM139 365h1v3h-1zM140 365h1v3h-1zM141 364h1v3h-1zM142 364h1v3h-1zM143 365h1v2h-1zM144 365h1v3h-1zM145 365h1v3h-1zM146 364h1v3h-1zM147 364h1v4h-1zM148 363h1v5h-1zM149 363h1v4h-1zM150 365h1v2h-1zM151 363h1v4h-1zM152 362h1v3h-1zM153 362h1v3h-1zM154 363h1v4h-1zM155 365h1v2h-1zM156 365h1v4h-1zM157 364h1v5h-1zM158 364h1v4h-1zM159 366h1v3h-1zM160 367h1v2h-1zM161 365h1v4h-1zM162 365h1v6h-1zM163 369h1v4h-1zM164 369h1v4h-1zM165 367h1v4h-1zM166 367h1v3h-1zM167 368h1v2h-1zM168 368h1v5h-1zM169 369h1v4h-1zM170 368h1v3h-1zM171 368h1v4h-1zM172 368h1v4h-1zM173 368h1v5h-1zM174 368h1v5h-1zM175 368h1v2h-1zM176 368h1v4h-1zM177 370h1v2h-1zM178 370h1v2h-1zM179 369h1v3h-1zM180 366h1v5h-1zM181 366h1v4h-1zM182 368h1v2h-1zM183 368h1v2h-1zM184 368h1v4h-1zM185 368h1v4h-1zM186 368h1v4h-1zM187 369h1v3h-1zM188 368h1v3h-1zM189 368h1v3h-1zM190 369h1v2h-1zM191 369h1v2h-1zM192 368h1v3h-1zM193 368h1v2h-1zM194 366h1v4h-1zM195 366h1v6h-1zM196 370h1v2h-1zM197 368h1v4h-1zM198 367h1v3h-1zM199 366h1v3h-1zM200 366h1v4h-1zM201 368h1v2h-1zM202 368h1v4h-1zM203 367h1v5h-1zM204 366h1v3h-1zM205 364h1v4h-1zM206 364h1v7h-1zM207 367h1v4h-1zM208 364h1v5h-1zM209 364h1v5h-1zM210 364h1v5h-1zM211 364h1v9h-1zM212 368h1v5h-1zM213 367h1v3h-1zM214 366h1v3h-1zM215 364h1v4h-1zM216 364h1v4h-1zM217 364h1v4h-1zM218 364h1v5h-1zM219 364h1v5h-1zM220 364h1v3h-1zM221 365h1v5h-1zM222 368h1v3h-1zM223 365h1v6h-1zM224 365h1v2h-1zM225 365h1v5h-1zM226 368h1v2h-1zM227 366h1v4h-1zM228 366h1v2h-1zM229 366h1v2h-1zM230 366h1v2h-1zM231 366h1v2h-1zM232 366h1v5h-1zM233 368h1v3h-1zM234 368h1v3h-1zM235 366h1v5h-1zM236 366h1v2h-1zM237 365h1v3h-1zM238 365h1v3h-1zM239 364h1v4h-1zM240 363h1v3h-1zM241 363h1v6h-1zM242 367h1v2h-1zM243 366h1v3h-1zM244 366h1v3h-1zM245 365h1v4h-1zM246 364h1v3h-1zM247 364h1v3h-1zM248 364h1v3h-1zM249 363h1v3h-1zM250 362h1v3h-1zM251 362h1v2h-1zM252 362h1v4h-1zM253 364h1v2h-1zM254 363h1v3h-1zM255 363h1v4h-1zM256 364h1v3h-1zM257 364h1v2h-1zM258 364h1v3h-1zM259 363h1v4h-1zM260 361h1v4h-1zM261 361h1v6h-1zM262 363h1v4h-1zM263 363h1v5h-1zM264 364h1v4h-1zM265 364h1v3h-1zM266 365h1v2h-1zM267 361h1v6h-1zM268 361h1v6h-1zM269 363h1v4h-1zM270 363h1v2h-1zM271 363h1v3h-1zM272 364h1v3h-1zM273 365h1v2h-1zM274 365h1v3h-1zM275 362h1v6h-1zM276 362h1v4h-1zM277 361h1v5h-1zM278 361h1v5h-1zM279 364h1v3h-1zM280 364h1v3h-1zM281 364h1v2h-1zM282 364h1v2h-1zM283 364h1v3h-1zM284 362h1v5h-1zM285 361h1v3h-1zM286 361h1v2h-1zM287 361h1v5h-1zM288 363h1v3h-1zM289 361h1v4h-1zM290 361h1v2h-1zM291 360h1v3h-1zM292 360h1v2h-1zM293 359h1v3h-1zM294 359h1v2h-1zM295 358h1v3h-1zM296 358h1v3h-1zM297 359h1v5h-1zM298 360h1v4h-1zM299 360h1v2h-1zM300 359h1v3h-1zM301 359h1v3h-1zM302 360h1v2h-1zM303 359h1v3h-1zM304 359h1v3h-1zM305 360h1v2h-1zM306 359h1v3h-1zM307 359h1v2h-1zM308 359h1v2h-1zM309 359h1v2h-1zM310 359h1v4h-1zM311 357h1v6h-1zM312 357h1v5h-1zM313 359h1v3h-1zM314 359h1v2h-1zM315 359h1v3h-1zM316 360h1v4h-1zM317 360h1v4h-1zM318 360h1v2h-1zM319 359h1v3h-1zM320 359h1v3h-1zM321 360h1v4h-1zM322 360h1v4h-1zM323 359h1v3h-1zM324 359h1v2h-1zM325 359h1v2h-1zM326 359h1v2h-1zM327 359h1v5h-1zM328 361h1v3h-1zM329 360h1v3h-1zM330 360h1v5h-1zM331 360h1v5h-1zM332 360h1v4h-1zM333 362h1v2h-1zM334 359h1v5h-1zM335 359h1v2h-1zM336 359h1v3h-1zM337 360h1v4h-1zM338 362h1v3h-1zM339 359h1v6h-1zM340 359h1v5h-1zM341 361h1v3h-1zM342 361h1v2h-1zM343 360h1v3h-1zM344 360h1v3h-1zM345 359h1v4h-1zM346 359h1v3h-1zM347 360h1v2h-1zM348 360h1v4h-1zM349 362h1v4h-1zM350 364h1v3h-1zM351 361h1v6h-1zM352 359h1v4h-1zM353 359h1v4h-1zM354 360h1v3h-1zM355 360h1v6h-1zM356 362h1v4h-1zM357 361h1v3h-1zM358 361h1v4h-1zM359 363h1v2h-1zM360 360h1v5h-1zM361 360h1v3h-1zM362 361h1v3h-1zM363 362h1v2h-1zM364 362h1v2h-1zM365 362h1v2h-1zM366 362h1v2h-1zM367 361h1v3h-1zM368 360h1v3h-1zM369 360h1v5h-1zM370 361h1v4h-1zM371 360h1v3h-1zM372 357h1v5h-1zM373 357h1v4h-1zM374 359h1v3h-1zM375 357h1v5h-1zM376 357h1v5h-1zM377 358h1v4h-1zM378 358h1v3h-1zM379 358h1v3h-1zM380 358h1v3h-1zM381 359h1v3h-1zM382 358h1v4h-1zM383 358h1v4h-1zM384 357h1v5h-1zM385 357h1v2h-1zM386 357h1v4h-1zM387 357h1v4h-1zM388 357h1v2h-1zM389 357h1v4h-1zM390 359h1v2h-1zM391 356h1v5h-1zM392 356h1v5h-1zM393 359h1v4h-1zM394 360h1v3h-1zM395 358h1v4h-1zM396 358h1v2h-1zM397 358h1v2h-1zM398 357h1v3h-1zM399 357h1v4h-1zM400 359h1v2h-1zM401 359h1v2h-1zM402 359h1v4h-1zM403 359h1v4h-1zM404 357h1v4h-1zM405 357h1v6h-1zM406 358h1v5h-1zM407 358h1v2h-1zM408 358h1v3h-1zM409 358h1v3h-1zM410 357h1v3h-1zM411 357h1v3h-1zM412 358h1v5h-1zM413 357h1v6h-1zM414 357h1v3h-1zM415 358h1v3h-1zM416 359h1v2h-1zM417 358h1v3h-1zM418 358h1v2h-1zM419 355h1v5h-1zM420 355h1v3h-1zM421 356h1v3h-1zM422 357h1v2h-1zM423 357h1v3h-1zM424 357h1v3h-1zM425 356h1v3h-1zM426 356h1v3h-1zM427 357h1v2h-1zM428 357h1v2h-1zM429 357h1v3h-1zM430 357h1v3h-1zM431 356h1v3h-1zM432 356h1v2h-1zM433 356h1v5h-1zM434 359h1v2h-1zM435 359h1v2h-1zM436 359h1v2h-1zM437 359h1v2h-1zM438 358h1v3h-1zM439 358h1v3h-1zM440 357h1v4h-1zM441 357h1v3h-1zM442 357h1v3h-1zM443 357h1v4h-1zM444 358h1v3h-1zM445 358h1v2h-1zM446 358h1v3h-1zM447 359h1v3h-1zM448 358h1v4h-1zM449 358h1v2h-1zM450 358h1v4h-1zM451 357h1v5h-1zM452 357h1v5h-1zM453 358h1v4h-1z" fill="#ff00ff"/>
</svg>
<div class="t r" style="left:21.5px;top:125px;width:20px">50</div>
<div class="t" style="left:470px;top:125px">20</div>
<div class="t r" style="left:21.5px;top:152px;width:20px">40</div>
<div class="t" style="left:470px;top:152px">16</div>
<div class="t r" style="left:21.5px;top:179px;width:20px">30</div>
<div class="t" style="left:470px;top:179px">12</div>
<div class="t r" style="left:21.5px;top:205px;width:20px">20</div>
<div class="t" style="left:470px;top:205px">8</div>
<div class="t r" style="left:21.5px;top:232px;width:20px">10</div>
<div class="t" style="left:470px;top:232px">4</div>
<div class="t r" style="left:21.5px;top:287px;width:20px">10</div>
<div class="t" style="left:470px;top:287px">20</div>
<div class="t r" style="left:21.5px;top:314px;width:20px">8</div>
<div class="t" style="left:470px;top:314px">16</div>
<div class="t r" style="left:21.5px;top:341px;width:20px">6</div>
<div class="t" style="left:470px;top:341px">12</div>
<div class="t r" style="left:21.5px;top:367px;width:20px">4</div>
<div class="t" style="left:470px;top:367px">8</div>
<div class="t r" style="left:21.5px;top:394px;width:20px">2</div>
<div class="t" style="left:470px;top:394px">4</div>
<div class="t c" style="left:38px;top:269px;width:24px">0.0</div>
<div class="t c" style="left:84px;top:269px;width:24px">0.5</div>
<div class="t c" style="left:131px;top:269px;width:24px">1.0</div>
<div class="t c" style="left:177px;top:269px;width:24px">1.5</div>
<div class="t c" style="left:224px;top:269px;width:24px">2.0</div>
<div class="t c" style="left:270px;top:269px;width:24px">2.5</div>
<div class="t c" style="left:317px;top:269px;width:24px">3.0</div>
<div class="t c" style="left:363px;top:269px;width:24px">3.5</div>
<div class="t c" style="left:410px;top:269px;width:24px">4.0</div>
<div class="t c" style="left:456px;top:269px;width:24px">4.5</div>
<div class="t c" style="left:38px;top:431px;width:24px">0.0</div>
<div class="t c" style="left:84px;top:431px;width:24px">0.5</div>
<div class="t c" style="left:131px;top:431px;width:24px">1.0</div>
<div class="t c" style="left:177px;top:431px;width:24px">1.5</div>
<div class="t c" style="left:224px;top:431px;width:24px">2.0</div>
<div class="t c" style="left:270px;top:431px;width:24px">2.5</div>
<div class="t c" style="left:317px;top:431px;width:24px">3.0</div>
<div class="t c" style="left:363px;top:431px;width:24px">3.5</div>
<div class="t c" style="left:410px;top:431px;width:24px">4.0</div>
<div class="t c" style="left:456px;top:431px;width:24px">4.5</div>
<div class="grp" style="left:491px;top:126px;width:139px;height:84px"></div>
<div class="lg" style="left:498px;top:121px;width:45px"><span>Disc info</span></div>
<div class="t" style="left:500px;top:135px">Type:</div>
<div class="t b" style="left:545px;top:135px">DVD-R</div>
<div class="t" style="left:499px;top:152px">ID:</div>
<div class="t b" style="left:545px;top:152px">SONY16D1</div>
<div class="t" style="left:499px;top:170px">Date:</div>
<div class="t b" style="left:545px;top:170px">n/a</div>
<div class="t" style="left:499px;top:188px">Label:</div>
<div class="t b" style="left:545px;top:188px">n/a</div>
<div class="grp" style="left:491px;top:217px;width:139px;height:204px"></div>
<div class="lg" style="left:498px;top:212px;width:42px"><span>Settings</span></div>
<div class="t" style="left:499px;top:226px">Speed:</div>
<div class="sunk" style="left:500px;top:242px;width:84px;height:21px"></div>
<div class="t" style="left:505px;top:246px">8 X</div>
<div class="btn" style="left:566px;top:244px;width:16px;height:17px"></div>
<svg width="641" height="524" viewBox="0 0 641 524" shape-rendering="crispEdges"><path d="M570 250h7v1h-1v1h-1v1h-1v1h-1v-1h-1v-1h-1v-1h-1z" fill="#000"/></svg>
<div class="btn" style="left:592px;top:240px;width:23px;height:23px"></div>
<svg width="641" height="524" viewBox="0 0 641 524" shape-rendering="crispEdges">
<rect x="596" y="243" width="14" height="16" fill="#000"/><rect x="597" y="244" width="12" height="14" fill="#fff"/>
<path d="M599 248h1v3h-1z M599 247h5v1h-5z M602 245h1v5h-1z M603 246h1v3h-1z M604 247h1v1h-1z M606 251h1v3h-1z M602 254h5v1h-5z M603 252h1v5h-1z M602 253h1v3h-1z M601 254h1v1h-1z" fill="#008000"/>
</svg>
<div class="t" style="left:502px;top:273px">Start:</div>
<div class="sunk" style="left:554px;top:268px;width:60px;height:20px"></div>
<div class="t" style="left:557px;top:271px">0000 MB</div>
<div class="t" style="left:502px;top:295px">End:</div>
<div class="sunk" style="left:554px;top:291px;width:60px;height:20px"></div>
<div class="t" style="left:557px;top:294px">4480 MB</div>
<div class="cb" style="left:502px;top:316px;background:#fff"></div>
<div class="t" style="left:520px;top:316px;letter-spacing:0.25px;">Quick scan</div>
<div class="cb" style="left:502px;top:337px;background:#fff"></div>
<svg width="641" height="524" viewBox="0 0 641 524" shape-rendering="crispEdges"><path d="M505 342v3h1v1h1v1h1v-1h1v-1h1v-1h1v-1h1v-3h-1v1h-1v1h-1v1h-1v1h-1v-1h-1v-1h-1v-1z" fill="#000"/></svg>
<div class="t" style="left:520px;top:337px;">Show C1/PIE</div>
<div class="cb" style="left:502px;top:353px;background:#fff"></div>
<svg width="641" height="524" viewBox="0 0 641 524" shape-rendering="crispEdges"><path d="M505 358v3h1v1h1v1h1v-1h1v-1h1v-1h1v-1h1v-3h-1v1h-1v1h-1v1h-1v1h-1v-1h-1v-1h-1v-1z" fill="#000"/></svg>
<div class="t" style="left:520px;top:353px;">Show C2/PIF</div>
<div class="cb" style="left:502px;top:370px;background:#fff"></div>
<svg width="641" height="524" viewBox="0 0 641 524" shape-rendering="crispEdges"><path d="M505 375v3h1v1h1v1h1v-1h1v-1h1v-1h1v-1h1v-3h-1v1h-1v1h-1v1h-1v1h-1v-1h-1v-1h-1v-1z" fill="#000"/></svg>
<div class="t" style="left:520px;top:370px;">Show jitter</div>
<div class="cb" style="left:502px;top:386px;background:#fff"></div>
<svg width="641" height="524" viewBox="0 0 641 524" shape-rendering="crispEdges"><path d="M505 391v3h1v1h1v1h1v-1h1v-1h1v-1h1v-1h1v-3h-1v1h-1v1h-1v1h-1v1h-1v-1h-1v-1h-1v-1z" fill="#000"/></svg>
<div class="t" style="left:520px;top:386px;">Show read speed</div>
<div class="cb" style="left:502px;top:402px;background:#d4d0c8"></div>
<svg width="641" height="524" viewBox="0 0 641 524" shape-rendering="crispEdges"><path d="M505 407v3h1v1h1v1h1v-1h1v-1h1v-1h1v-1h1v-3h-1v1h-1v1h-1v1h-1v1h-1v-1h-1v-1h-1v-1z" fill="#808080"/></svg>
<div class="t" style="left:520px;top:402px;color:#808080;text-shadow:1px 1px 0 #fff">Show write speed</div>
<div class="grp" style="left:491px;top:427px;width:139px;height:26px"></div>
<div class="t" style="left:502px;top:434px">Quality score:</div>
<div class="t b r" style="left:581px;top:434px;width:40px;letter-spacing:0.5px">95</div>
<div class="grp" style="left:491px;top:459px;width:139px;height:56px"></div>
<svg width="641" height="524" viewBox="0 0 641 524">
<defs><linearGradient id="wm" x1="0" y1="1" x2="1" y2="0"><stop offset="0" stop-color="#b9b5ad"/><stop offset="0.55" stop-color="#c9c6be"/><stop offset="1" stop-color="#dedbd4"/></linearGradient></defs>
<circle cx="595.500" cy="484" r="18.500" fill="url(#wm)" opacity="0.9"/>
<circle cx="595.500" cy="484" r="18" fill="none" stroke="#b4b0a8" stroke-width="1" opacity="0.8"/>
<circle cx="595.500" cy="484" r="16.500" fill="none" stroke="#dcd9d2" stroke-width="1.200" opacity="0.7"/>
<circle cx="595.500" cy="484" r="6" fill="#bcb8b0" opacity="0.8"/>
<circle cx="595.500" cy="484" r="3.500" fill="#e4e1da"/>
</svg>
<div class="t" style="left:502px;top:468px;letter-spacing:-0.2px">Progress:</div>
<div class="t b r" style="left:561px;top:468px;width:61px;word-spacing:0px">100 %</div>
<div class="t" style="left:502px;top:484px;letter-spacing:-0.05px">Position:</div>
<div class="t b r" style="left:560px;top:484px;width:61px;word-spacing:0px">4479 MB</div>
<div class="t" style="left:502px;top:499px;letter-spacing:0px">Speed:</div>
<div class="t b r" style="left:561px;top:499px;width:61px;word-spacing:1px">8.37 X</div>
<div class="grp" style="left:14px;top:459px;width:145px;height:56px"></div>
<div class="lg" style="left:24px;top:453px;padding-left:11px;width:53px"><span style="letter-spacing:-0.2px">PI Errors</span></div>
<div class="a" style="left:24px;top:456px;width:8px;height:8px;border:1px solid #000;background:#00ffff"></div>
<div class="t" style="left:22px;top:469px;letter-spacing:0px">Average:</div>
<div class="t b r" style="left:102px;top:469px;width:50px;letter-spacing:0.4px">5.29</div>
<div class="t" style="left:21px;top:484px;letter-spacing:-0.15px">Maximum:</div>
<div class="t b r" style="left:102px;top:484px;width:50px;letter-spacing:0.4px">29</div>
<div class="t" style="left:23px;top:499px;letter-spacing:0px">Total:</div>
<div class="t b r" style="left:102px;top:499px;width:50px;letter-spacing:0.4px">60777</div>
<div class="grp" style="left:173px;top:459px;width:145px;height:56px"></div>
<div class="lg" style="left:183px;top:453px;padding-left:10px;width:61px"><span style="letter-spacing:-0.2px">PI Failures</span></div>
<div class="a" style="left:183px;top:456px;width:8px;height:8px;border:1px solid #000;background:#ffff00"></div>
<div class="t" style="left:181px;top:469px;letter-spacing:0px">Average:</div>
<div class="t b r" style="left:261px;top:469px;width:50px;letter-spacing:0.4px">0.07</div>
<div class="t" style="left:180px;top:484px;letter-spacing:-0.15px">Maximum:</div>
<div class="t b r" style="left:261px;top:484px;width:50px;letter-spacing:0.4px">8</div>
<div class="t" style="left:182px;top:499px;letter-spacing:0px">Total:</div>
<div class="t b r" style="left:261px;top:499px;width:50px;letter-spacing:0.4px">726</div>
<div class="grp" style="left:332px;top:459px;width:146px;height:42px"></div>
<div class="lg" style="left:342px;top:453px;padding-left:10px;width:33px"><span style="letter-spacing:-0.3px">Jitter</span></div>
<div class="a" style="left:342px;top:456px;width:8px;height:8px;border:1px solid #000;background:#ff00ff"></div>
<div class="t" style="left:340px;top:469px;letter-spacing:0px">Average:</div>
<div class="t b r" style="left:420px;top:469px;width:50px;letter-spacing:0.4px">9.40 %</div>
<div class="t" style="left:339px;top:484px;letter-spacing:-0.15px">Maximum:</div>
<div class="t b r" style="left:420px;top:484px;width:50px;letter-spacing:0.4px">11.1 %</div>
<div class="t" style="left:340px;top:503px;letter-spacing:-0.15px">PO failures:</div>
<div class="t b r" style="left:419px;top:503px;width:50px">0</div>
<div class="a" style="left:557px;top:505px;font-weight:bold;font-size:17px;color:#e6e3dc;opacity:0.5;white-space:nowrap;line-height:17px;transform:scaleX(.68);transform-origin:0 0;-webkit-text-stroke:0.6px #e6e3dc">CDRLABS.COM</div>
</body></html>
